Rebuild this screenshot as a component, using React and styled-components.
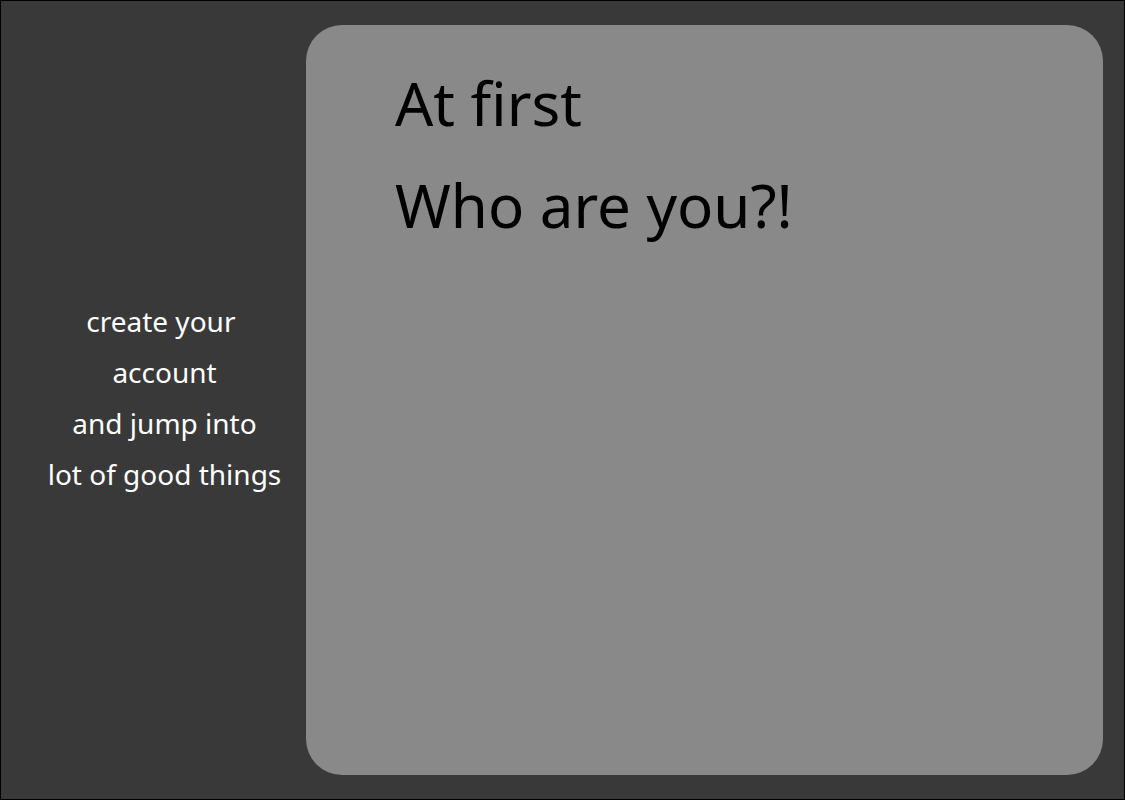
import React from "react";
import styled, { createGlobalStyle } from "styled-components";

const GlobalStyle = createGlobalStyle`
  html, body {
    margin: 0;
    padding: 0;
    background: #393939;
  }
  * {
    box-sizing: border-box;
  }
`;

const lines = ["create your ", "account", "and jump into", "lot of good things"];

const App = () => {
  return (
    <>
      <GlobalStyle />
      <Page>
        <Intro>
          {lines.map((line, i) => (
            <IntroLine key={i}>{line}</IntroLine>
          ))}
        </Intro>
        <Panel>
          <Heading>At first</Heading>
          <Heading>Who are you?!</Heading>
        </Panel>
      </Page>
    </>
  );
};

const Page = styled.div`
  width: 1125px;
  height: 800px;
  border: 1px solid #000;
  background: #393939;
  display: flex;
  align-items: stretch;
  padding: 24px 21px 24px 0;
  font-family: "Noto Sans", "DejaVu Sans", sans-serif;
`;

const Intro = styled.div`
  width: 305px;
  padding: 0 0 4px 22px;
  display: flex;
  flex-direction: column;
  justify-content: center;
  align-items: center;
  color: #fff;
`;

const IntroLine = styled.p`
  margin: 0;
  font-size: 28px;
  line-height: 51px;
  white-space: pre;
`;

const Panel = styled.div`
  flex: 1;
  background: #898989;
  border-radius: 36px;
  padding: 27px 0 0 89px;
  color: #000;
`;

const Heading = styled.h1`
  margin: 0;
  font-size: 60px;
  font-weight: 400;
  line-height: 102px;
`;

export default App;
